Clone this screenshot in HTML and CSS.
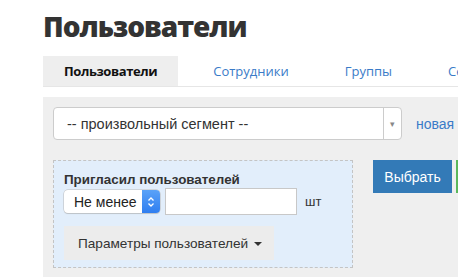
FILE: index.html
```html
<!DOCTYPE html>
<html lang="ru">
<head>
    <meta charset="UTF-8">
    <title>Пользователи</title>
    <link rel="stylesheet" href="styles.css">
</head>
<body>
    <div class="page">
        <h1>Пользователи</h1>
        <ul class="tabs">
            <li class="active">Пользователи</li>
            <li><a href="#">Сотрудники</a></li>
            <li><a href="#">Группы</a></li>
            <li><a href="#">Сегменты</a></li>
        </ul>

        <div class="panel">
            <div class="segment-row">
                <div class="segment-select">
                    <span class="segment-value">-- произвольный сегмент --</span>
                    <span class="segment-arrow">&#9662;</span>
                </div>
                <a href="#" class="new-link">новая</a>
            </div>

            <div class="filter-row">
                <div class="filter-box">
                    <div class="filter-label">Пригласил пользователей</div>
                    <div class="filter-controls">
                        <div class="mac-select">
                            <span>Не менее</span>
                            <span class="stepper">
                                <svg width="8" height="12" viewBox="0 0 8 12">
                                    <path d="M1.5 4.5 L4 2 L6.5 4.5 M1.5 7.5 L4 10 L6.5 7.5" fill="none" stroke="#fff" stroke-width="1.3"/>
                                </svg>
                            </span>
                        </div>
                        <input type="text" class="count-input">
                        <span class="unit">шт</span>
                    </div>
                    <button class="params-btn">Параметры пользователей <span class="caret"></span></button>
                </div>
                <button class="select-btn">Выбрать</button>
                <div class="green-edge"></div>
            </div>
        </div>
    </div>
</body>
</html>
```

FILE: styles.css
```css
body {
    margin: 0;
    font-family: "Liberation Sans", Arial, sans-serif;
    color: #333;
    background: #fff;
    overflow: hidden;
}
.page {
    padding-left: 43px;
}
h1 {
    margin: 0;
    padding-top: 8px;
    height: 48px;
    font-family: "Open Sans", sans-serif;
    font-weight: 800;
    font-size: 28px;
    line-height: 36px;
    color: #333;
    letter-spacing: -1px;
}
.tabs {
    list-style: none;
    margin: 0;
    padding: 0;
    display: flex;
    gap: 14px;
    height: 30px;
    border-bottom: 1px solid #e6e6e6;
    white-space: nowrap;
}
.tabs li {
    flex-shrink: 0;
    padding: 0 21px;
    font-family: "Open Sans", sans-serif;
    font-size: 13px;
    line-height: 30px;
}
.tabs li.active {
    background: #eee;
    font-weight: 700;
    color: #111;
    letter-spacing: -0.4px;
}
.tabs a {
    color: #3a7bc8;
    text-decoration: none;
}
.panel {
    margin-top: 10px;
    background: #efefef;
    padding: 10px;
    height: 200px;
}
.segment-row {
    display: flex;
    align-items: center;
    gap: 14px;
}
.segment-select {
    width: 347px;
    height: 31px;
    background: #fff;
    border: 1px solid #ccc;
    border-radius: 4px;
    display: flex;
    align-items: center;
    flex-shrink: 0;
}
.segment-value {
    flex: 1;
    padding-left: 13px;
    font-size: 14.5px;
    color: #333;
}
.segment-arrow {
    width: 17px;
    height: 100%;
    border-left: 1px solid #ccc;
    color: #888;
    font-size: 9px;
    display: flex;
    align-items: center;
    justify-content: center;
}
.new-link {
    color: #3a7bc8;
    text-decoration: none;
    font-size: 14px;
    white-space: nowrap;
}
.filter-row {
    display: flex;
    align-items: flex-start;
    margin-top: 20px;
}
.filter-box {
    width: 278px;
    height: 86px;
    padding: 10px;
    border: 1px dashed #c4c4c4;
    background: #e2eefb;
    flex-shrink: 0;
}
.filter-label {
    font-weight: bold;
    font-size: 13.4px;
    line-height: 16px;
    margin-top: 1px;
}
.filter-controls {
    display: flex;
    align-items: center;
    height: 27px;
}
.mac-select {
    width: 96px;
    height: 23px;
    background: #fff;
    border-radius: 4px;
    box-shadow: 0 0 0 0.5px #bbb, 0 1px 1px rgba(0, 0, 0, 0.15);
    display: flex;
    align-items: center;
    font-size: 14px;
    color: #222;
}
.mac-select span:first-child {
    flex: 1;
    padding-left: 10px;
}
.stepper {
    width: 18px;
    height: 23px;
    background: linear-gradient(#5aa2f8, #2f7ef0);
    border-radius: 0 4px 4px 0;
    display: flex;
    align-items: center;
    justify-content: center;
}
.count-input {
    margin-left: 5px;
    width: 132px;
    height: 27px;
    box-sizing: border-box;
    border: 1px solid #c8c8c8;
    background: #fff;
    padding: 0;
}
.unit {
    margin-left: 8px;
    font-size: 13px;
    color: #333;
}
.params-btn {
    margin-top: 11px;
    width: 210px;
    height: 34px;
    border: none;
    background: #ececec;
    font-family: "Liberation Sans", Arial, sans-serif;
    font-size: 13.6px;
    color: #333;
    text-align: left;
    padding: 0 0 0 14px;
}
.caret {
    display: inline-block;
    width: 0;
    height: 0;
    margin-left: 2px;
    vertical-align: middle;
    border-top: 4px solid #333;
    border-left: 4px solid transparent;
    border-right: 4px solid transparent;
}
.select-btn {
    margin-left: 20px;
    width: 79px;
    height: 33px;
    background: #337ab7;
    color: #fff;
    border: none;
    font-family: "Liberation Sans", Arial, sans-serif;
    font-size: 14px;
    flex-shrink: 0;
}
.green-edge {
    margin-left: 4px;
    width: 2px;
    height: 33px;
    background: #5cb85c;
    flex-shrink: 0;
}
```
